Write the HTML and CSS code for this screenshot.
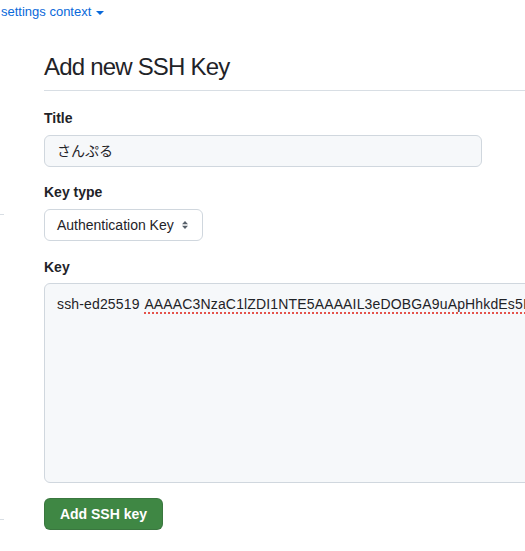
FILE: index.html
```html
<!DOCTYPE html>
<html lang="ja">
<head>
<meta charset="utf-8">
<title>Add new SSH Key</title>
<link rel="stylesheet" href="styles.css">
</head>
<body>
<div class="topbar">
  <a class="context-link" href="#">settings context<svg class="caret" width="8" height="4" viewBox="0 0 8 4"><path d="M0 0h8L4 4z" fill="currentColor"/></svg></a>
</div>
<div class="layout">
  <aside class="sidebar">
    <div class="side-sep side-sep-1"></div>
    <div class="side-sep side-sep-2"></div>
  </aside>
  <main class="main">
    <div class="subhead">
      <h2 class="subhead-heading">Add new SSH Key</h2>
    </div>
    <form class="form">
      <div class="form-group">
        <label class="form-label">Title</label>
        <div class="input title-input">さんぷる</div>
      </div>
      <div class="form-group">
        <label class="form-label">Key type</label>
        <div class="select">Authentication Key<svg class="select-icon" width="8" height="12" viewBox="0 0 8 12"><path d="M4 2 7 5.2H1z M4 10 1 6.8h6z" fill="#57606a"/></svg></div>
      </div>
      <div class="form-group">
        <label class="form-label">Key</label>
        <div class="textarea">ssh-ed25519 <span class="misspelled">AAAAC3NzaC1lZDI1NTE5AAAAIL3eDOBGA9uApHhkdEs5Ij</span></div>
      </div>
      <button class="btn-primary" type="button">Add SSH key</button>
    </form>
  </main>
</div>
</body>
</html>
```

FILE: styles.css
```css
html, body {
  margin: 0;
  padding: 0;
  background: #ffffff;
  overflow: hidden;
}
body {
  font-family: "Liberation Sans", Arial, "Noto Sans CJK JP", sans-serif;
  color: #1f2328;
  font-size: 14px;
  line-height: 20px;
  width: 525px;
  height: 551px;
}
.topbar {
  height: 24px;
  display: flex;
  align-items: center;
}
.context-link {
  color: #0969da;
  text-decoration: none;
  font-size: 13px;
  line-height: 24px;
  display: flex;
  align-items: center;
  padding-left: 1px;
}
.caret {
  margin-left: 5px;
  margin-top: 1px;
}
.layout {
  display: flex;
}
.sidebar {
  width: 4px;
  flex: none;
  display: flex;
  flex-direction: column;
}
.side-sep {
  height: 1px;
  background: #d8dee4;
}
.side-sep-1 { margin-top: 190px; }
.side-sep-2 { margin-top: 304px; }
.main {
  padding-left: 40px;
  flex: 1;
  min-width: 0;
}
.subhead {
  margin-top: 25px;
  padding-bottom: 5px;
  border-bottom: 1px solid #d8dee4;
  margin-bottom: 17px;
}
.subhead-heading {
  margin: 0;
  font-size: 24px;
  line-height: 36px;
  font-weight: 400;
  letter-spacing: -0.8px;
}
.form-group {
  margin-bottom: 15px;
}
.form-group:nth-child(2) {
  margin-bottom: 16px;
}
.form-label {
  display: block;
  font-weight: 700;
  font-size: 14px;
  line-height: 20px;
  margin-bottom: 7px;
}
.form-group:nth-child(3) .form-label {
  margin-bottom: 6px;
}
.input {
  box-sizing: border-box;
  height: 32px;
  width: 438px;
  padding: 0 12px;
  background: #f6f8fa;
  border: 1px solid #d0d7de;
  border-radius: 6px;
  display: flex;
  align-items: center;
  font-family: "Liberation Sans", "Noto Sans CJK JP", sans-serif;
  font-size: 14px;
}
.select {
  box-sizing: border-box;
  height: 32px;
  width: 159px;
  padding: 0 0 0 12px;
  background: #ffffff;
  border: 1px solid #d0d7de;
  border-radius: 6px;
  display: flex;
  align-items: center;
  font-size: 14px;
}
.select-icon {
  margin-left: 7px;
}
.textarea {
  box-sizing: border-box;
  height: 200px;
  width: 560px;
  padding: 10px 12px;
  background: #f6f8fa;
  border: 1px solid #d0d7de;
  border-radius: 6px;
  font-size: 14px;
  line-height: 20px;
  letter-spacing: 0.15px;
  word-spacing: 1.5px;
  white-space: nowrap;
  overflow: hidden;
}
.misspelled {
  text-decoration: underline dotted #e5534b;
  text-decoration-thickness: 2px;
  text-underline-offset: 3px;
}
.btn-primary {
  box-sizing: border-box;
  height: 32px;
  width: 119px;
  border: 1px solid rgba(31, 35, 40, 0.15);
  border-radius: 6px;
  background: #3f8744;
  color: #ffffff;
  font-family: "Liberation Sans", Arial, sans-serif;
  font-weight: 700;
  font-size: 14px;
  padding: 0;
  display: flex;
  align-items: center;
  justify-content: center;
}
```
